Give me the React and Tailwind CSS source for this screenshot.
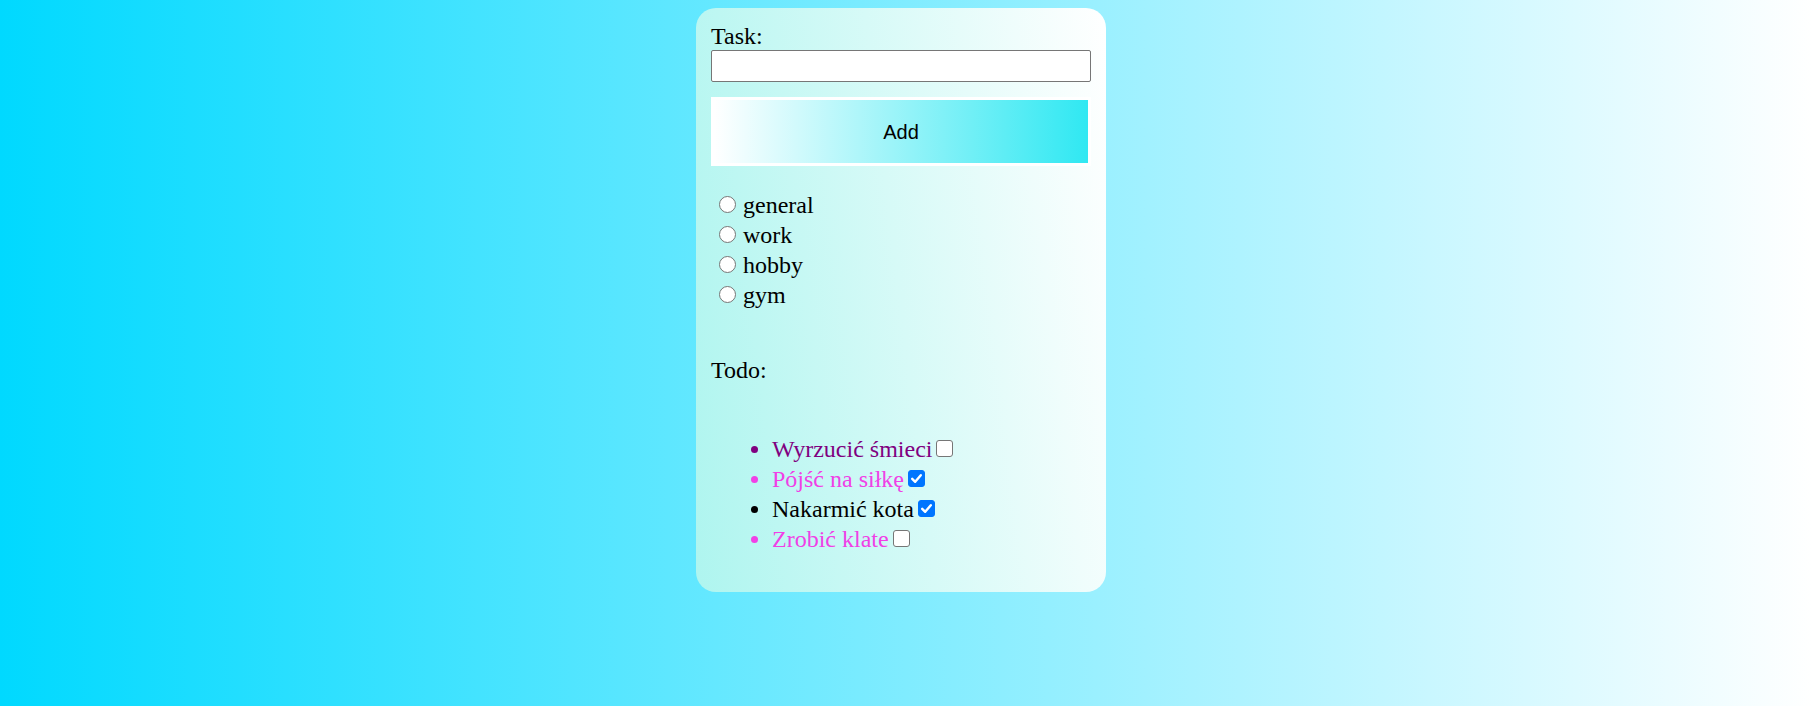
import React, { useState } from 'react';

// Mock data for todos
const initialTodos = [
  { id: 1, text: 'Wyrzucić śmieci', color: 'text-[#800080]', done: false },
  { id: 2, text: 'Pójść na siłkę', color: 'text-[#f040e6]', done: true },
  { id: 3, text: 'Nakarmić kota', color: 'text-black', done: true },
  { id: 4, text: 'Zrobić klate', color: 'text-[#f040e6]', done: false },
];

const categories = ['general', 'work', 'hobby', 'gym'];

// native-looking controls, drawn a bit bigger with a heavier border
const Radio = ({ checked, onChange }) => (
  <label className="relative mr-[1px] inline-block h-[17px] w-[17px]">
    <input type="radio" name="category" checked={checked} onChange={onChange} className="peer absolute inset-0 m-0 opacity-0" />
    <span className="block h-full w-full rounded-full border-[1.5px] border-[#767676] bg-white peer-checked:border-[5px] peer-checked:border-[#0075ff]" />
  </label>
);

const Checkbox = ({ checked, onChange }) => (
  <label className="relative ml-1 inline-block h-[17px] w-[17px]">
    <input type="checkbox" checked={checked} onChange={onChange} className="peer absolute inset-0 m-0 opacity-0" />
    <span className="block h-full w-full rounded-[3px] border-[1.5px] border-[#767676] bg-white peer-checked:border-[#0075ff] peer-checked:bg-[#0075ff]" />
    {checked && (
      <svg viewBox="0 0 17 17" className="absolute inset-0 h-[17px] w-[17px]">
        <path d="M4.2 8.8 L7.2 11.8 L12.8 5.2" fill="none" stroke="white" strokeWidth="2.4" strokeLinecap="round" strokeLinejoin="round" />
      </svg>
    )}
  </label>
);

const App = () => {
  const [task, setTask] = useState('');
  const [category, setCategory] = useState(null);
  const [todos, setTodos] = useState(initialTodos);

  const toggleTodo = (id) => {
    setTodos(todos.map((t) => (t.id === id ? { ...t, done: !t.done } : t)));
  };

  return (
    <div className="min-h-screen bg-[linear-gradient(to_right,#00d9ff,#ffffff)] pt-2 font-['Liberation_Serif',serif] text-black">
      <div className="flex justify-center pr-[11px]">
        <div className="w-[410px] rounded-[20px] bg-[linear-gradient(83deg,#aef5ef,#ffffff)] px-[15px] pt-[14px] pb-[38px] text-[24px]">
          <label className="block leading-[28px]">Task:</label>
          <input
            type="text"
            value={task}
            onChange={(e) => setTask(e.target.value)}
            className="block h-8 w-[380px] rounded-[2px] border border-[#767676] bg-white px-1 text-[16px]"
          />
          <button className="mt-[15px] h-[69px] w-[380px] border-[3px] border-white bg-[linear-gradient(to_right,#ffffff,#30e8f2)] font-['Liberation_Sans',Arial,sans-serif] text-[20px] text-black">
            Add
          </button>

          <div className="mt-6 pl-2 leading-[30px]">
            {categories.map((c) => (
              <div key={c}>
                <Radio checked={category === c} onChange={() => setCategory(c)} /> {c}
              </div>
            ))}
          </div>

          <p className="mt-[46px] leading-[28px]">Todo:</p>

          <ul className="mt-[50px] list-disc pl-[61px] leading-[30px]">
            {todos.map((t) => (
              <li key={t.id} className={t.color}>
                {t.text}
                <Checkbox checked={t.done} onChange={() => toggleTodo(t.id)} />
              </li>
            ))}
          </ul>
        </div>
      </div>
    </div>
  );
};

export default App;
